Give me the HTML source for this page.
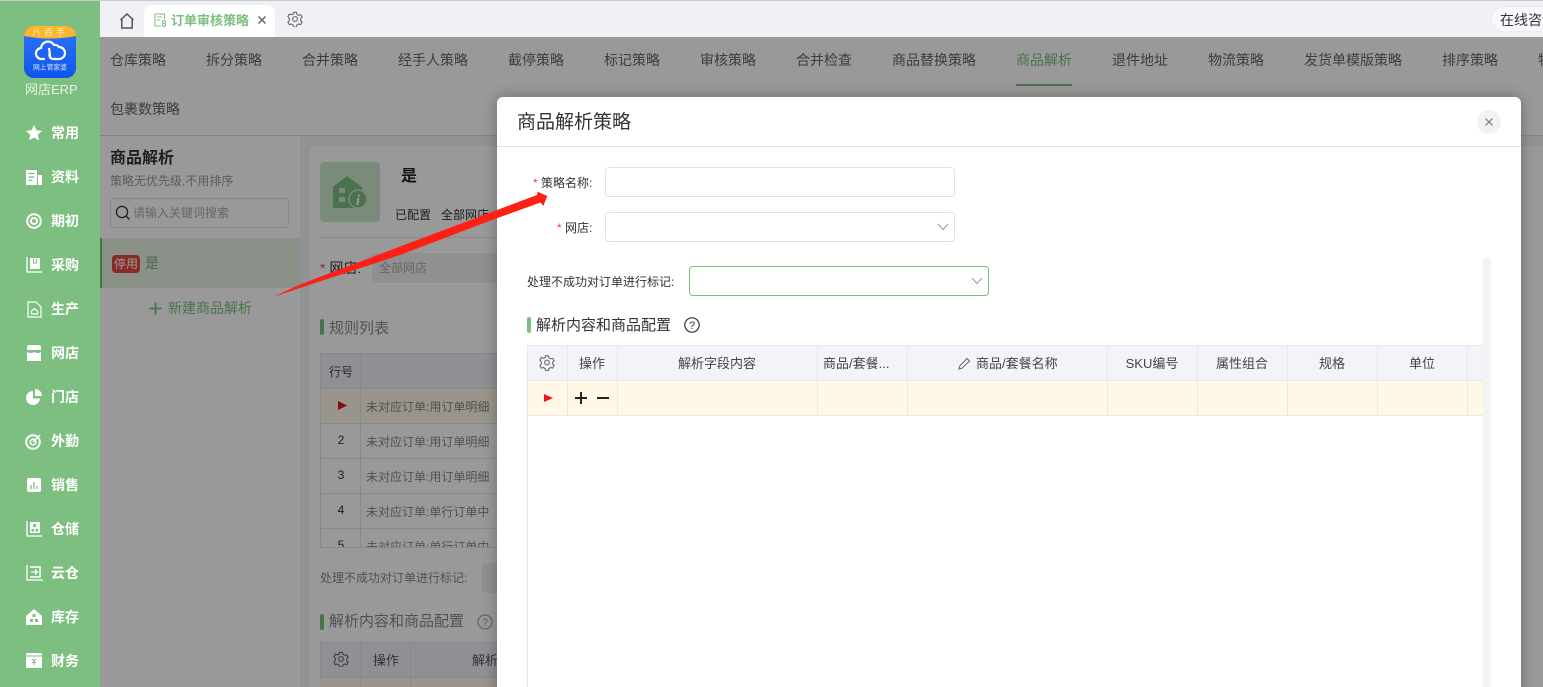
<!DOCTYPE html>
<html lang="zh">
<head>
<meta charset="utf-8">
<title>商品解析策略</title>
<style>
html,body{margin:0;padding:0;width:1543px;height:687px;overflow:hidden;background:#fff}
body{position:relative;font-family:"Liberation Sans","Noto Sans CJK SC",sans-serif;font-size:12px;color:#333}
div,span,svg{position:absolute;box-sizing:border-box}
.t{white-space:nowrap;line-height:20px;margin-top:-9px}
.c{text-align:center}
.side{left:0;top:0;width:100px;height:687px;background:#7dbf80}
.m{left:51px;color:#fff;font-size:14px;font-weight:700}
.nav{font-size:14px;color:#666}
.box{border:1px solid #dfe1e6;border-radius:4px;background:#fff}
.line{background:#e6e8ef}
.rq{color:#e2445c}
.h{font-size:13px;color:#444}
</style>
</head>
<body>
<!-- base page under overlay -->
<div style="left:100px;top:37px;width:1443px;height:650px;background:#fff"></div>
<div class="t nav" style="left:110px;top:59px">仓库策略</div>
<div class="t nav" style="left:206px;top:59px">拆分策略</div>
<div class="t nav" style="left:302px;top:59px">合并策略</div>
<div class="t nav" style="left:398px;top:59px">经手人策略</div>
<div class="t nav" style="left:508px;top:59px">截停策略</div>
<div class="t nav" style="left:604px;top:59px">标记策略</div>
<div class="t nav" style="left:700px;top:59px">审核策略</div>
<div class="t nav" style="left:796px;top:59px">合并检查</div>
<div class="t nav" style="left:892px;top:59px">商品替换策略</div>
<div class="t nav" style="left:1016px;top:59px;color:#7dbf80">商品解析</div>
<div style="left:1016px;top:84px;width:56px;height:2px;background:#7dbf80"></div>
<div class="t nav" style="left:1112px;top:59px">退件地址</div>
<div class="t nav" style="left:1208px;top:59px">物流策略</div>
<div class="t nav" style="left:1304px;top:59px">发货单模版策略</div>
<div class="t nav" style="left:1442px;top:59px">排序策略</div>
<div class="t nav" style="left:1538px;top:59px">物流</div>
<div class="t nav" style="left:110px;top:108px">包裹数策略</div>
<div style="left:100px;top:135px;width:1443px;height:1px;background:#dcdde2"></div>

<!-- gap background -->
<div style="left:300px;top:136px;width:1243px;height:551px;background:#f2f3f8"></div>
<div style="left:310px;top:146px;width:1233px;height:541px;background:#fff;border-radius:6px 0 0 0"></div>

<!-- left panel -->
<div class="t" style="left:110px;top:158px;font-size:16px;font-weight:700;color:#333">商品解析</div>
<div class="t" style="left:110px;top:180px;color:#999">策略无优先级,不用排序</div>
<div class="box" style="left:110px;top:198px;width:179px;height:30px"></div>
<svg style="left:115px;top:205px" width="16" height="16" viewBox="0 0 16 16" fill="none" stroke="#333" stroke-width="1.3"><circle cx="7" cy="7" r="5.600"/><path d="M11 11l3.500 3.500"/></svg>
<div class="t" style="left:133px;top:212px;color:#aaa">请输入关键词搜索</div>
<div style="left:100px;top:238px;width:200px;height:50px;background:#e4f2e5;border-left:2px solid #7dbf80"></div>
<div class="c" style="left:112px;top:255px;width:28px;height:18px;line-height:18px;background:#e4473f;color:#fff;border-radius:4px;font-size:12px">停用</div>
<div class="t" style="left:145px;top:262px;font-size:14px;color:#7dab80">是</div>
<svg style="left:149px;top:302px" width="13" height="13" viewBox="0 0 13 13"><path d="M6.500 0.500v12M0.500 6.500h12" stroke="#7dbf80" stroke-width="1.800"/></svg>
<div class="t" style="left:168px;top:307px;font-size:14px;color:#7dbf80">新建商品解析</div>

<!-- right card -->
<div style="left:320px;top:162px;width:60px;height:60px;border-radius:4px;background:#cbe8cd"></div>
<svg style="left:332px;top:175px" width="36" height="34" viewBox="0 0 36 34">
<path d="M1 12L15 1l15 11v21H1z" fill="#7dbf80"/>
<rect x="7" y="13" width="6" height="5" fill="#cbe8cd"/><rect x="7" y="22" width="6" height="5" fill="#cbe8cd"/>
<circle cx="26" cy="24" r="9" fill="#7dbf80" stroke="#cbe8cd" stroke-width="1.500"/>
<text x="26" y="30" text-anchor="middle" font-size="15" font-style="italic" font-weight="700" fill="#fff" font-family="Liberation Serif">i</text></svg>
<div class="t" style="left:401px;top:176px;font-size:16px;font-weight:700;color:#222">是</div>
<div class="t" style="left:395px;top:214px;color:#333">已配置</div>
<div class="t" style="left:441px;top:214px;color:#333">全部网店</div>
<div style="left:320px;top:237px;width:200px;height:1px;background:#e4e4e4"></div>
<div class="t" style="left:320px;top:267px;font-size:14px;color:#333"><span class="rq" style="position:static">*</span> 网店:</div>
<div class="box" style="left:372px;top:253px;width:200px;height:30px;background:#f0f1f3;border-color:#eceef1"></div>
<div class="t" style="left:379px;top:267px;color:#aaa">全部网店</div>
<div style="left:320px;top:319px;width:4px;height:16px;border-radius:2px;background:#7dbf80"></div>
<div class="t" style="left:329px;top:328px;font-size:15px;color:#888">规则列表</div>

<div style="left:320px;top:353px;width:220px;height:195px;overflow:hidden;border:1px solid #e3e4ea;background:#fff">
  <div style="left:0;top:0;width:220px;height:34px;background:#eef0f6"></div>
  <div class="t c" style="left:0;top:17px;width:40px;color:#444;font-size:12px">行号</div>
  <div style="left:0;top:34px;width:220px;height:35px;background:#fff8e6"></div>
  <div style="left:0;top:34px;width:220px;height:1px;background:#e3e4ea"></div>
  <div style="left:0;top:69px;width:220px;height:1px;background:#e3e4ea"></div>
  <div style="left:0;top:104px;width:220px;height:1px;background:#e3e4ea"></div>
  <div style="left:0;top:139px;width:220px;height:1px;background:#e3e4ea"></div>
  <div style="left:0;top:174px;width:220px;height:1px;background:#e3e4ea"></div>
  <div style="left:39px;top:0;width:1px;height:195px;background:#e3e4ea"></div>
  <svg style="left:17px;top:47px" width="9" height="9" viewBox="0 0 9 9"><path d="M0 0l9 4.500L0 9z" fill="#e3131b"/></svg>
  <div class="t c" style="left:0;top:85px;width:40px;color:#333">2</div>
  <div class="t c" style="left:0;top:120px;width:40px;color:#333">3</div>
  <div class="t c" style="left:0;top:155px;width:40px;color:#333">4</div>
  <div class="t c" style="left:0;top:190px;width:40px;color:#333">5</div>
  <div class="t" style="left:45px;top:52px;color:#888">未对应订单:用订单明细</div>
  <div class="t" style="left:45px;top:87px;color:#888">未对应订单:用订单明细</div>
  <div class="t" style="left:45px;top:122px;color:#888">未对应订单:用订单明细</div>
  <div class="t" style="left:45px;top:157px;color:#888">未对应订单:单行订单中</div>
  <div class="t" style="left:45px;top:192px;color:#888">未对应订单:单行订单中</div>
</div>

<div class="t" style="left:320px;top:577px;color:#888">处理不成功对订单进行标记:</div>
<div class="box" style="left:482px;top:563px;width:60px;height:30px;background:#f0f1f3;border-color:#eceef1"></div>
<div style="left:320px;top:614px;width:4px;height:16px;border-radius:2px;background:#7dbf80"></div>
<div class="t" style="left:329px;top:621px;font-size:15px;color:#888">解析内容和商品配置</div>
<svg style="left:477px;top:614px" width="16" height="16" viewBox="0 0 16 16"><circle cx="8" cy="8" r="7" fill="none" stroke="#aaa" stroke-width="1.300"/><text x="8" y="12" text-anchor="middle" font-size="11" fill="#aaa" font-family="Liberation Sans">?</text></svg>
<div style="left:320px;top:642px;width:220px;height:36px;background:#eef0f6;border:1px solid #e3e4ea"></div>
<div style="left:320px;top:678px;width:220px;height:9px;background:#fff8e6"></div>
<div style="left:360px;top:642px;width:1px;height:45px;background:#e3e4ea"></div>
<div style="left:410px;top:642px;width:1px;height:45px;background:#e3e4ea"></div>
<svg style="left:333px;top:651px" width="16" height="16" viewBox="0 0 24 24" fill="none" stroke="#666" stroke-width="1.600"><circle cx="12" cy="12" r="3.600"/><path d="M9.800 2h4.400l.7 3 2.600 1.500 3-.9 2.200 3.800-2.200 2.100v3l2.200 2.100-2.200 3.800-3-.9-2.600 1.500-.7 3H9.800l-.7-3-2.600-1.500-3 .9-2.200-3.800 2.200-2.100v-3L1.300 8.400l2.200-3.800 3 .9L9.100 5z"/></svg>
<div class="t" style="left:373px;top:660px;color:#555;font-size:13px">操作</div>
<div class="t" style="left:472px;top:660px;color:#555;font-size:13px">解析字段内容</div>

<!-- overlay -->
<div style="left:100px;top:37px;width:1443px;height:650px;background:rgba(0,0,0,.4)"></div>

<!-- sidebar -->
<div class="side"></div>
<div style="left:24px;top:26px;width:52px;height:52px;border-radius:10px;overflow:hidden;background:linear-gradient(#2f74f8,#0f55ee)">
  <svg style="left:0;top:0" width="52" height="52" viewBox="0 0 52 52">
    <path d="M0 0h52v10q-26 5-52 0z" fill="#fdb52b"/>
    <text x="26" y="9.500" text-anchor="middle" font-size="9" fill="#fff4d0" font-family="Noto Sans CJK SC" letter-spacing="3">八百手</text>
    <path d="M21 33h-3a5.500 5.500 0 0 1-1-11 7 7 0 0 1 13-3 5.500 5.500 0 0 1 5 2 5.800 5.800 0 0 1 0 12h-6a4 4 0 0 1-3-6M25 22l1.500 11" fill="none" stroke="#fff" stroke-width="2.200"/>
    <text x="26" y="43.500" text-anchor="middle" font-size="6.800" fill="#d8e6ff" font-family="Noto Sans CJK SC">网上管家婆</text>
  </svg>
</div>
<div class="t" style="left:25px;top:89px;color:#e6f3e6;font-size:13px">网店ERP</div>

<svg style="left:26px;top:125px" width="16" height="16" viewBox="0 0 16 16"><path d="M8 0l2.400 5.300 5.600.6-4.200 3.800 1.200 5.700L8 12.500 3 15.400l1.200-5.700L0 5.900l5.600-.6z" fill="#fff"/></svg>
<div class="t m" style="top:132px">常用</div>
<svg style="left:25px;top:169px" width="18" height="16" viewBox="0 0 18 16"><path d="M1 1h11v15H1z" fill="#fff"/><path d="M13 6h4v10h-4z" fill="#fff"/><path d="M3.500 4.500h6M3.500 8h6M3.500 11.500h4" stroke="#7dbf80" stroke-width="1.300"/></svg>
<div class="t m" style="top:176px">资料</div>
<svg style="left:26px;top:213px" width="16" height="16" viewBox="0 0 16 16"><circle cx="8" cy="8" r="6.800" fill="none" stroke="#fff" stroke-width="2"/><circle cx="8" cy="8" r="3" fill="none" stroke="#fff" stroke-width="2"/></svg>
<div class="t m" style="top:220px">期初</div>
<svg style="left:26px;top:257px" width="16" height="16" viewBox="0 0 16 16"><path d="M1 0v15h15" fill="none" stroke="#fff" stroke-width="1.300"/><path d="M4 1h10v11H4z" fill="#fff"/><path d="M7.500 2v4h3V2" fill="none" stroke="#7dbf80"/></svg>
<div class="t m" style="top:264px">采购</div>
<svg style="left:27px;top:301px" width="15" height="17" viewBox="0 0 15 17" fill="none" stroke="#fff" stroke-width="1.200"><path d="M1 1h8l5 5v10H1z"/><path d="M4.500 10L7.500 7.500 10.500 10v3h-6z"/></svg>
<div class="t m" style="top:308px">生产</div>
<svg style="left:26px;top:345px" width="16" height="16" viewBox="0 0 16 16"><path d="M1 2q0-2 2-2h10q2 0 2 2v3H1z" fill="#fff"/><path d="M1 7q3.500 2 7 0 3.500 2 7 0v9H1z" fill="#fff"/></svg>
<div class="t m" style="top:352px">网店</div>
<svg style="left:26px;top:389px" width="16" height="16" viewBox="0 0 16 16"><path d="M7 2v7.500h7A7 7 0 1 1 7 2z" fill="#fff"/><path d="M9 0a7 7 0 0 1 7 7H9z" fill="#fff"/></svg>
<div class="t m" style="top:396px">门店</div>
<svg style="left:25px;top:433px" width="17" height="17" viewBox="0 0 17 17"><circle cx="8" cy="9" r="6.800" fill="none" stroke="#fff" stroke-width="2"/><circle cx="8" cy="9" r="2.800" fill="none" stroke="#fff" stroke-width="1.600"/><path d="M8 9l7-7" stroke="#fff" stroke-width="1.500"/></svg>
<div class="t m" style="top:440px">外勤</div>
<svg style="left:26px;top:477px" width="16" height="16" viewBox="0 0 16 16"><rect x="1" y="1" width="14" height="14" rx="2" fill="#fff"/><path d="M5 8v4M8 5v7M11 9v3" stroke="#7dbf80" stroke-width="1.300"/></svg>
<div class="t m" style="top:484px">销售</div>
<svg style="left:26px;top:521px" width="16" height="16" viewBox="0 0 16 16"><path d="M1 0v15h15" fill="none" stroke="#fff" stroke-width="1.300"/><path d="M4 1h10v11H4z" fill="#fff"/><path d="M7 3h3v3H7zM5.500 8h2.500v2.500H5.500zM9.500 8H12v2.500H9.500z" fill="#7dbf80"/></svg>
<div class="t m" style="top:528px">仓储</div>
<svg style="left:26px;top:565px" width="17" height="16" viewBox="0 0 17 16"><path d="M1 0v15h16" fill="none" stroke="#fff" stroke-width="1.300"/><path d="M4 2h10v10H4" fill="none" stroke="#fff" stroke-width="1.500"/><path d="M5 7h6M9 4.500L11.500 7 9 9.500" fill="none" stroke="#fff" stroke-width="1.300"/></svg>
<div class="t m" style="top:572px">云仓</div>
<svg style="left:26px;top:609px" width="16" height="16" viewBox="0 0 16 16"><path d="M8 0l8 7v9H0V7z" fill="#fff"/><path d="M6.500 5h3v3h-3zM4 10h3v3H4zM9 10h3v3H9z" fill="#7dbf80"/></svg>
<div class="t m" style="top:616px">库存</div>
<svg style="left:26px;top:653px" width="16" height="15" viewBox="0 0 16 15"><rect x="0" y="0" width="16" height="15" rx="1" fill="#fff"/><path d="M0 3h16" stroke="#7dbf80"/><path d="M6 6l2 2 2-2M8 8v4M6 9.500h4" stroke="#7dbf80" fill="none"/></svg>
<div class="t m" style="top:660px">财务</div>

<!-- top tab bar -->
<div style="left:100px;top:0;width:1443px;height:37px;background:#eff1f5"></div>
<div style="left:0;top:0;width:1543px;height:1px;background:#c9cac9"></div>
<svg style="left:119px;top:13px" width="16" height="16" viewBox="0 0 16 16"><path d="M1.500 7L8 1l6.500 6M2.800 6v9h10.400V6" fill="none" stroke="#555" stroke-width="1.500"/></svg>
<div style="left:144px;top:5px;width:131px;height:32px;background:#fff;border-radius:8px 8px 0 0"></div>
<svg style="left:154px;top:13px" width="14" height="14" viewBox="0 0 14 14" fill="none" stroke="#7dbf80" stroke-width="1"><path d="M10.500 6V1H1v12h6"/><path d="M3 4h5M3 7h3"/><circle cx="10" cy="9" r="1.500"/><circle cx="10" cy="12" r="1.500"/></svg>
<div class="t" style="left:171px;top:20px;font-size:13px;font-weight:700;color:#7dbf80">订单审核策略</div>
<svg style="left:258px;top:16px" width="8" height="8" viewBox="0 0 8 8"><path d="M.5.500l7 7M7.500.500l-7 7" stroke="#666" stroke-width="1.500"/></svg>
<svg style="left:287px;top:11px" width="16" height="16" viewBox="0 0 24 24" fill="none" stroke="#666" stroke-width="1.600"><circle cx="12" cy="12" r="3.600"/><path d="M9.800 2h4.400l.7 3 2.600 1.500 3-.9 2.200 3.800-2.200 2.100v3l2.200 2.100-2.200 3.800-3-.9-2.600 1.500-.7 3H9.800l-.7-3-2.600-1.500-3 .9-2.200-3.800 2.200-2.100v-3L1.300 8.400l2.200-3.800 3 .9L9.100 5z"/></svg>
<div style="left:1491px;top:6px;width:70px;height:26px;border-radius:13px;background:#f8f9fc;border:1px solid #e9ebf0"></div>
<div class="t" style="left:1500px;top:19px;font-size:14px;color:#333">在线咨询</div>

<!-- dialog -->
<div style="left:497px;top:97px;width:1024px;height:600px;background:#fff;border-radius:6px 6px 0 0;box-shadow:0 0 14px rgba(0,0,0,.3)"></div>
<div class="t" style="left:517px;top:122px;font-size:19px;color:#333">商品解析策略</div>
<div style="left:1477px;top:110px;width:24px;height:24px;border-radius:50%;background:#f2f2f2"></div>
<svg style="left:1485px;top:118px" width="8" height="8" viewBox="0 0 8 8"><path d="M.5.500l7 7M7.500.500l-7 7" stroke="#777" stroke-width="1.200"/></svg>
<div style="left:497px;top:146px;width:1024px;height:1px;background:#e2e2e2"></div>

<div class="t" style="left:533px;top:182px;font-size:12px;color:#333"><span class="rq" style="position:static">*</span> 策略名称:</div>
<div class="box" style="left:605px;top:167px;width:350px;height:30px"></div>
<div class="t" style="left:557px;top:227px;font-size:12px;color:#333"><span class="rq" style="position:static">*</span> 网店:</div>
<div class="box" style="left:605px;top:212px;width:350px;height:30px"></div>
<svg style="left:937px;top:223px" width="12" height="8" viewBox="0 0 12 8"><path d="M1 1l5 5.500L11 1" fill="none" stroke="#7f9fb8" stroke-width="1"/></svg>
<div class="t" style="left:527px;top:281px;font-size:12px;color:#333">处理不成功对订单进行标记:</div>
<div style="left:689px;top:266px;width:300px;height:30px;border:1px solid #7dbf80;border-radius:4px"></div>
<svg style="left:971px;top:277px" width="12" height="8" viewBox="0 0 12 8"><path d="M1 1l5 5.500L11 1" fill="none" stroke="#7f9fb8" stroke-width="1"/></svg>

<div style="left:527px;top:317px;width:4px;height:16px;border-radius:2px;background:#7dbf80"></div>
<div class="t" style="left:536px;top:325px;font-size:15px;color:#333">解析内容和商品配置</div>
<svg style="left:684px;top:317px" width="16" height="16" viewBox="0 0 16 16"><circle cx="8" cy="8" r="7.200" fill="none" stroke="#333" stroke-width="1.200"/><text x="8" y="12" text-anchor="middle" font-size="11" fill="#333" font-family="Liberation Sans">?</text></svg>

<div style="left:527px;top:345px;width:956px;height:36px;background:#f2f4f9"></div>
<div style="left:527px;top:381px;width:956px;height:35px;background:#fff8e6"></div>
<div class="line" style="left:527px;top:345px;width:956px;height:1px"></div>
<div class="line" style="left:527px;top:380px;width:956px;height:1px"></div>
<div class="line" style="left:527px;top:415px;width:956px;height:1px"></div>
<div class="line" style="left:527px;top:345px;width:1px;height:342px"></div>
<div class="line" style="left:567px;top:345px;width:1px;height:71px"></div>
<div class="line" style="left:617px;top:345px;width:1px;height:71px"></div>
<div class="line" style="left:817px;top:345px;width:1px;height:71px"></div>
<div class="line" style="left:907px;top:345px;width:1px;height:71px"></div>
<div class="line" style="left:1107px;top:345px;width:1px;height:71px"></div>
<div class="line" style="left:1197px;top:345px;width:1px;height:71px"></div>
<div class="line" style="left:1287px;top:345px;width:1px;height:71px"></div>
<div class="line" style="left:1377px;top:345px;width:1px;height:71px"></div>
<div class="line" style="left:1467px;top:345px;width:1px;height:71px"></div>

<svg style="left:539px;top:354px" width="16" height="17" viewBox="0 0 24 24" fill="none" stroke="#666" stroke-width="1.600"><circle cx="12" cy="12" r="3.600"/><path d="M9.800 2h4.400l.7 3 2.600 1.500 3-.9 2.200 3.800-2.200 2.100v3l2.200 2.100-2.200 3.800-3-.9-2.600 1.500-.7 3H9.800l-.7-3-2.600-1.500-3 .9-2.200-3.800 2.200-2.100v-3L1.300 8.400l2.200-3.800 3 .9L9.100 5z"/></svg>
<div class="t c h" style="left:567px;top:363px;width:50px">操作</div>
<div class="t c h" style="left:617px;top:363px;width:200px">解析字段内容</div>
<div class="t h" style="left:823px;top:363px">商品/套餐...</div>
<svg style="left:958px;top:357px" width="13" height="13" viewBox="0 0 13 13" fill="none" stroke="#666"><path d="M1 12l.8-3L9 1.500 11.500 4 4 11.200z"/></svg>
<div class="t h" style="left:976px;top:363px">商品/套餐名称</div>
<div class="t c h" style="left:1107px;top:363px;width:90px">SKU编号</div>
<div class="t c h" style="left:1197px;top:363px;width:90px">属性组合</div>
<div class="t c h" style="left:1287px;top:363px;width:90px">规格</div>
<div class="t c h" style="left:1377px;top:363px;width:90px">单位</div>

<svg style="left:544px;top:394px" width="9" height="8" viewBox="0 0 9 8"><path d="M0 0l9 4-9 4z" fill="#f0141c"/></svg>
<svg style="left:574px;top:391px" width="14" height="14" viewBox="0 0 14 14"><path d="M7 1v12M1 7h12" stroke="#222" stroke-width="2"/></svg>
<svg style="left:596px;top:391px" width="14" height="14" viewBox="0 0 14 14"><path d="M1 7h12" stroke="#222" stroke-width="2"/></svg>

<div style="left:1483px;top:257px;width:8px;height:430px;background:#f3f3f3;border-radius:4px 4px 0 0"></div>

<!-- red arrow -->
<svg style="left:0;top:0" width="1543" height="687" viewBox="0 0 1543 687"><polygon points="273,297 300,284.500 400,246.500 490,212.700 537,195 537.700,191.700 547.300,196 543.300,206 540.500,202.500 490,220.700 400,255 300,288" fill="#ff2015"/></svg>
</body>
</html>
